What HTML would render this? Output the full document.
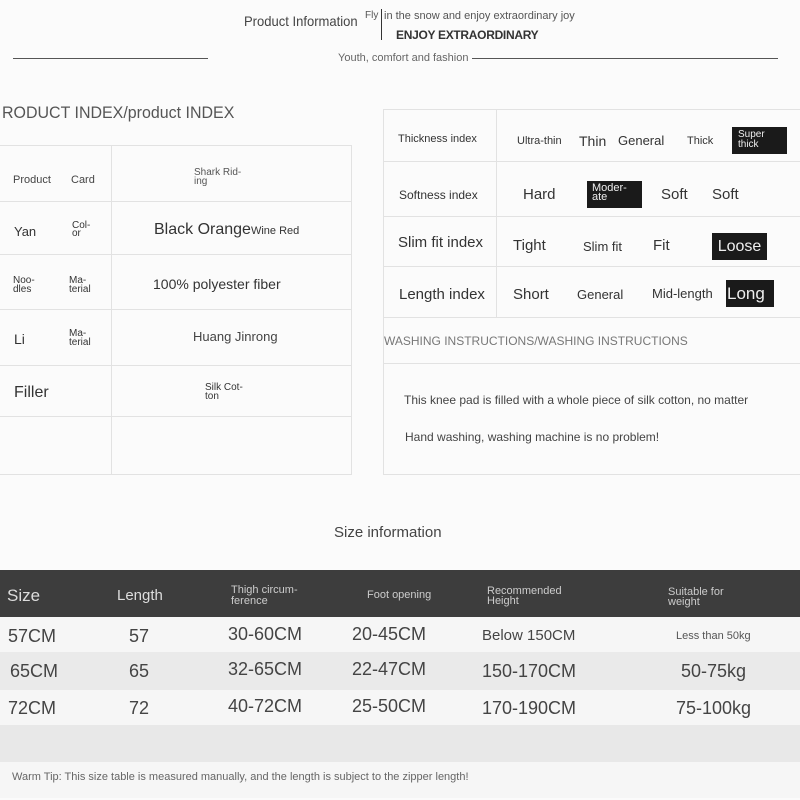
<!DOCTYPE html>
<html><head><meta charset="utf-8"><style>
*{margin:0;padding:0;box-sizing:border-box}
body{width:800px;height:800px;background:#fbfbfb;font-family:"Liberation Sans",sans-serif;color:#333;position:relative;overflow:hidden}
.a{position:absolute;white-space:nowrap}
.hl{position:absolute;height:1px;background:#e2e2e2}
.vl{position:absolute;width:1px;background:#e2e2e2}
.sm{font-size:11px;line-height:9px}
.blk{position:absolute;background:#1a1a1a;color:#eee}
.n{font-family:"Liberation Sans Narrow","Liberation Sans",sans-serif}
</style></head><body>
<div class="a n" style="left:244px;top:13px;font-size:14px;color:#444;transform:scaleX(0.93);transform-origin:left">Product Information</div>
<div class="a n" style="left:365px;top:10px;font-size:10px;color:#555">Fly</div>
<div style="position:absolute;left:381px;top:9px;width:1px;height:31px;background:#333"></div>
<div class="a n" style="left:384px;top:10px;font-size:11px;color:#555">in the snow and enjoy extraordinary joy</div>
<div class="a" style="left:396px;top:28px;font-size:12px;font-weight:bold;color:#333;letter-spacing:-0.3px">ENJOY EXTRAORDINARY</div>
<div style="position:absolute;left:13px;top:58px;width:195px;height:1px;background:#555"></div>
<div class="a n" style="left:338px;top:52px;font-size:11px;color:#666">Youth, comfort and fashion</div>
<div style="position:absolute;left:472px;top:58px;width:306px;height:1px;background:#555"></div>
<div class="a n" style="left:2px;top:103px;font-size:17px;color:#555;transform:scaleX(0.94);transform-origin:left">RODUCT INDEX/product INDEX</div>

<!-- left table -->
<div class="hl" style="left:0;top:145px;width:352px"></div>
<div class="hl" style="left:0;top:201px;width:352px"></div>
<div class="hl" style="left:0;top:254px;width:352px"></div>
<div class="hl" style="left:0;top:309px;width:352px"></div>
<div class="hl" style="left:0;top:365px;width:352px"></div>
<div class="hl" style="left:0;top:416px;width:352px"></div>
<div class="hl" style="left:0;top:474px;width:352px"></div>
<div class="vl" style="left:111px;top:145px;height:330px"></div>
<div class="vl" style="left:351px;top:145px;height:330px"></div>
<div class="a" style="left:13px;top:174px;font-size:11px;color:#444">Product</div>
<div class="a" style="left:71px;top:174px;font-size:11px;color:#444">Card</div>
<div class="a sm" style="left:194px;top:168px;font-size:10px;line-height:9px;color:#555">Shark Rid-<br>ing</div>
<div class="a" style="left:14px;top:224px;font-size:13px">Yan</div>
<div class="a sm" style="left:72px;top:222px;font-size:10px;line-height:8px">Col-<br>or</div>
<div class="a" style="left:154px;top:221px;font-size:16px">Black <span style="font-size:16px">Orange</span><span style="font-size:11px">Wine Red</span></div>
<div class="a sm" style="left:13px;top:276px;font-size:10px;line-height:9px">Noo-<br>dles</div>
<div class="a sm" style="left:69px;top:276px;font-size:10px;line-height:9px">Ma-<br>terial</div>
<div class="a" style="left:153px;top:276px;font-size:14px">100% polyester fiber</div>
<div class="a" style="left:14px;top:331px;font-size:14px">Li</div>
<div class="a sm" style="left:69px;top:329px;font-size:10px;line-height:9px">Ma-<br>terial</div>
<div class="a" style="left:193px;top:329px;font-size:13px;color:#444">Huang Jinrong</div>
<div class="a" style="left:14px;top:384px;font-size:16px">Filler</div>
<div class="a sm" style="left:205px;top:383px;font-size:10px;line-height:9px">Silk Cot-<br>ton</div>

<!-- right table -->
<div class="hl" style="left:383px;top:109px;width:417px"></div>
<div class="hl" style="left:383px;top:161px;width:417px"></div>
<div class="hl" style="left:383px;top:216px;width:417px"></div>
<div class="hl" style="left:383px;top:266px;width:417px"></div>
<div class="hl" style="left:383px;top:317px;width:417px"></div>
<div class="hl" style="left:383px;top:363px;width:417px"></div>
<div class="hl" style="left:383px;top:474px;width:417px"></div>
<div class="vl" style="left:383px;top:109px;height:366px"></div>
<div class="vl" style="left:496px;top:109px;height:208px"></div>
<div class="a" style="left:398px;top:133px;font-size:11px">Thickness index</div>
<div class="a" style="left:517px;top:135px;font-size:11px">Ultra-thin</div>
<div class="a" style="left:579px;top:133px;font-size:14px">Thin</div>
<div class="a" style="left:618px;top:133px;font-size:13px">General</div>
<div class="a" style="left:687px;top:135px;font-size:11px">Thick</div>
<div class="blk sm" style="left:732px;top:127px;width:55px;height:27px;padding:3px 6px;font-size:10px;line-height:10px">Super<br>thick</div>
<div class="a" style="left:399px;top:188px;font-size:12px">Softness index</div>
<div class="a" style="left:523px;top:186px;font-size:15px">Hard</div>
<div class="blk sm" style="left:587px;top:181px;width:55px;height:27px;padding:3px 5px;font-size:11px;line-height:9px">Moder-<br>ate</div>
<div class="a" style="left:661px;top:186px;font-size:15px">Soft</div>
<div class="a" style="left:712px;top:186px;font-size:15px">Soft</div>
<div class="a" style="left:398px;top:234px;font-size:15px">Slim fit index</div>
<div class="a" style="left:513px;top:237px;font-size:15px">Tight</div>
<div class="a" style="left:583px;top:239px;font-size:13px">Slim fit</div>
<div class="a" style="left:653px;top:237px;font-size:15px">Fit</div>
<div class="blk" style="left:712px;top:233px;width:55px;height:27px;font-size:16px;line-height:27px;text-align:center">Loose</div>
<div class="a" style="left:399px;top:286px;font-size:15px">Length index</div>
<div class="a" style="left:513px;top:286px;font-size:15px">Short</div>
<div class="a" style="left:577px;top:287px;font-size:13px">General</div>
<div class="a" style="left:652px;top:286px;font-size:13px">Mid-length</div>
<div class="blk" style="left:726px;top:280px;width:48px;height:27px;font-size:17px;line-height:27px;padding-left:1px">Long</div>
<div class="a" style="left:384px;top:334px;font-size:12px;color:#777">WASHING INSTRUCTIONS/WASHING INSTRUCTIONS</div>
<div class="a" style="left:404px;top:393px;font-size:12px;color:#444">This knee pad is filled with a whole piece of silk cotton, no matter</div>
<div class="a" style="left:405px;top:430px;font-size:12px;color:#444">Hand washing, washing machine is no problem!</div>

<div class="a" style="left:334px;top:524px;font-size:15px;color:#444">Size information</div>

<!-- size table -->
<div style="position:absolute;left:0;top:570px;width:800px;height:47px;background:#3d3d3d"></div>
<div style="position:absolute;left:0;top:617px;width:800px;height:35px;background:#f6f6f6"></div>
<div style="position:absolute;left:0;top:652px;width:800px;height:38px;background:#eaeaea"></div>
<div style="position:absolute;left:0;top:690px;width:800px;height:35px;background:#f6f6f6"></div>
<div style="position:absolute;left:0;top:725px;width:800px;height:37px;background:#e8e8e8"></div>
<div style="position:absolute;left:0;top:762px;width:800px;height:36px;background:#f6f6f6"></div>
<div class="a n" style="left:7px;top:586px;font-size:17px;color:#ddd">Size</div>
<div class="a n" style="left:117px;top:587px;font-size:15px;color:#ddd">Length</div>
<div class="a n sm" style="left:231px;top:585px;font-size:11px;line-height:11px;color:#ccc">Thigh circum-<br>ference</div>
<div class="a n" style="left:367px;top:589px;font-size:11px;color:#ccc">Foot opening</div>
<div class="a n sm" style="left:487px;top:586px;font-size:11px;line-height:10px;color:#ccc">Recommended<br>Height</div>
<div class="a n sm" style="left:668px;top:587px;font-size:11px;line-height:10px;color:#ccc">Suitable for<br>weight</div>
<div class="a n" style="left:8px;top:626px;font-size:18px;color:#444">57CM</div>
<div class="a n" style="left:129px;top:626px;font-size:18px;color:#444">57</div>
<div class="a n" style="left:228px;top:624px;font-size:18px;color:#444">30-60CM</div>
<div class="a n" style="left:352px;top:624px;font-size:18px;color:#444">20-45CM</div>
<div class="a n" style="left:482px;top:627px;font-size:15px;color:#444">Below 150CM</div>
<div class="a n" style="left:676px;top:630px;font-size:11px;color:#555">Less than 50kg</div>
<div class="a n" style="left:10px;top:661px;font-size:18px;color:#444">65CM</div>
<div class="a n" style="left:129px;top:661px;font-size:18px;color:#444">65</div>
<div class="a n" style="left:228px;top:659px;font-size:18px;color:#444">32-65CM</div>
<div class="a n" style="left:352px;top:659px;font-size:18px;color:#444">22-47CM</div>
<div class="a n" style="left:482px;top:661px;font-size:18px;color:#444">150-170CM</div>
<div class="a n" style="left:681px;top:661px;font-size:18px;color:#444">50-75kg</div>
<div class="a n" style="left:8px;top:698px;font-size:18px;color:#444">72CM</div>
<div class="a n" style="left:129px;top:698px;font-size:18px;color:#444">72</div>
<div class="a n" style="left:228px;top:696px;font-size:18px;color:#444">40-72CM</div>
<div class="a n" style="left:352px;top:696px;font-size:18px;color:#444">25-50CM</div>
<div class="a n" style="left:482px;top:698px;font-size:18px;color:#444">170-190CM</div>
<div class="a n" style="left:676px;top:698px;font-size:18px;color:#444">75-100kg</div>
<div class="a n" style="left:12px;top:771px;font-size:11px;color:#666">Warm Tip: This size table is measured manually, and the length is subject to the zipper length!</div>
</body></html>
